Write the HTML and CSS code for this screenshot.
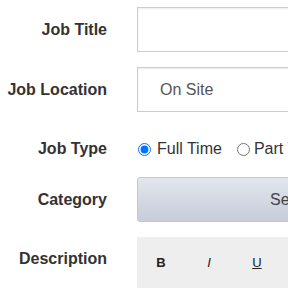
FILE: index.html
```html
<!DOCTYPE html>
<html>
<head>
    <meta charset="UTF-8">
    <title>Post a Job</title>
    <link rel="stylesheet" href="styles.css">
</head>
<body>
    <div id="wrap">
        <div class="row">
            <label class="label">Job Title</label>
            <div class="field"><input class="text" type="text"></div>
        </div>
        <div class="row">
            <label class="label">Job Location</label>
            <div class="field"><div class="text select">On Site</div></div>
        </div>
        <div class="row row-type">
            <label class="label">Job Type</label>
            <div class="field radios">
                <label class="opt"><input type="radio" name="type" checked>Full Time</label>
                <label class="opt opt2"><input type="radio" name="type">Part Time</label>
            </div>
        </div>
        <div class="row">
            <label class="label">Category</label>
            <div class="field"><button class="btn">Select Category</button></div>
        </div>
        <div class="row row-desc">
            <label class="label">Description</label>
            <div class="field">
                <div class="toolbar">
                    <span class="tool b">B</span>
                    <span class="tool i">I</span>
                    <span class="tool u">U</span>
                    <span class="tool">S</span>
                </div>
            </div>
        </div>
    </div>
</body>
</html>
```
FILE: styles.css
```css
html,body{margin:0;padding:0;}
body{
    font-family: "Liberation Sans", Arial, sans-serif;
    color: #333;
    background: #fff;
    overflow: hidden;
}

#wrap{
    width: 600px;
    padding-top: 7px;
}
.row{
    display: flex;
    align-items: center;
    margin-bottom: 15px;
}
.row-type{
    height: 44px;
    margin-bottom: 6px;
}
.row-desc{
    align-items: flex-start;
}
.row-desc .label{
    padding-top: 13px;
}
.label{
    flex-shrink: 0;
    width: 107px;
    text-align: right;
    font-size: 16px;
    font-weight: bold;
    color: #333;
}
.field{
    margin-left: 30px;
    flex: 1;
}
.text{
    box-sizing: border-box;
    display: block;
    width: 400px;
    height: 45px;
    margin: 0;
    padding: 0 22px;
    border: 1px solid #ccc;
    box-shadow: inset 0 1px 2px rgba(0,0,0,.08);
    font: 16px "Liberation Sans", Arial, sans-serif;
    color: #555;
    outline: none;
}
.select{
    line-height: 43px;
}

.radios{
    display: flex;
    align-items: center;
    font-size: 16px;
    color: #333;
}
.opt{
    display: flex;
    align-items: center;
    margin-right: 14px;
    white-space: nowrap;
}
.opt input{
    width: 13px;
    height: 13px;
    margin: 0 6px 0 1px;
}
.opt2 input{
    margin-right: 4px;
}

.btn{
    box-sizing: border-box;
    width: 380px;
    height: 45px;
    border: 1px solid #c3c8d2;
    border-radius: 3px;
    background: linear-gradient(#e2e6ee, #c6ccd8);
    font: 16px "Liberation Sans", Arial, sans-serif;
    color: #444;
}

.toolbar{
    display: flex;
    width: 400px;
    height: 51px;
    background: #eee;
}
.tool{
    width: 48px;
    line-height: 51px;
    text-align: center;
    font-size: 13px;
    color: #222;
}
.tool.b{font-weight: bold;}
.tool.i{font-style: italic;}
.tool.u{text-decoration: underline;}
```
